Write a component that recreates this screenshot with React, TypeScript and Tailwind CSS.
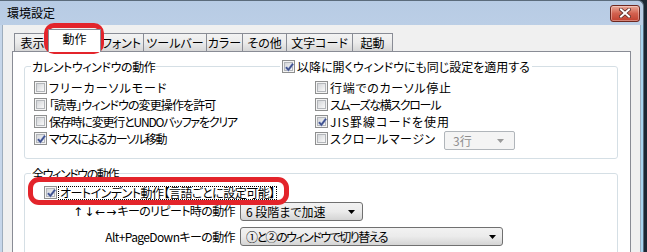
import React from "react";

function Check({ checked }: { checked?: boolean }) {
  return (
    <span className="relative flex h-[13px] w-[13px] shrink-0 border border-[#8e8f8f] bg-[#f4f4f4] p-[1px]">
      <span className="flex-1 border border-[#b3b6ba] bg-gradient-to-br from-[#d4d6d9] to-[#f9f9f9]" />
      {checked && (
        <svg className="absolute left-[1px] top-[1px]" width="11" height="11" viewBox="0 0 11 11">
          <path d="M2 5.2 L4.4 7.8 L9 1.8" fill="none" stroke="#9aa8d0" strokeWidth="2.6" />
          <path d="M2 5.2 L4.4 7.8 L9 1.8" fill="none" stroke="#3d4f8c" strokeWidth="1.4" />
        </svg>
      )}
    </span>
  );
}

function Arrow({ color }: { color: string }) {
  return (
    <svg width="7" height="4" viewBox="0 0 7 4" className="shrink-0">
      <path d="M0 0 H7 L3.5 4 Z" fill={color} />
    </svg>
  );
}

function Close() {
  return (
    <div className="flex h-[17px] w-[30px] items-center justify-center rounded-[3px] border border-[#6e271f] bg-gradient-to-b from-[#e9a999] via-[#d2614f] to-[#c0402f] shadow-[inset_0_0_0_1px_rgba(255,255,255,0.35)]">
      <svg width="12" height="10" viewBox="0 0 12 10">
        <path d="M2 1.5 L10 8.5 M10 1.5 L2 8.5" stroke="#5a2a25" strokeWidth="3.6" strokeLinecap="square" />
        <path d="M2 1.5 L10 8.5 M10 1.5 L2 8.5" stroke="#ffffff" strokeWidth="2" strokeLinecap="square" />
      </svg>
    </div>
  );
}

function Tab({ label, w, last }: { label: string; w: string; last?: boolean }) {
  return (
    <div
      className={
        "flex h-[18px] shrink-0 items-center justify-center border-t border-l border-[#898c95] bg-gradient-to-b from-[#f3f3f3] via-[#ebebeb] to-[#d6d6d6] " +
        w +
        (last ? " border-r" : "")
      }
    >
      {label}
    </div>
  );
}

function Row({ checked, t, children }: { checked?: boolean; t: string; children: React.ReactNode }) {
  return (
    <div className="flex h-[17px] items-center gap-[2px]">
      <Check checked={checked} />
      <span className={"whitespace-nowrap " + t}>{children}</span>
    </div>
  );
}

export default function App() {
  return (
    <div className="relative h-[252px] w-[647px] overflow-hidden bg-[#1c2733] font-['Noto_Sans_CJK_JP',sans-serif] text-[12px] leading-[14px] text-black [font-feature-settings:'palt']">
      <div className="flex h-[252px] w-[644px] flex-col overflow-hidden rounded-tr-[6px] border-t border-r border-[#5b6b7b] bg-gradient-to-b from-[#b7cbe4] via-[#c9d9ec] via-40% to-[#d9e5f2]">
        {/* title bar */}
        <div className="flex h-[24px] shrink-0 items-center pr-[3px] pl-[7px]">
          <span className="flex-1">環境設定</span>
          <Close />
        </div>
        <div className="flex min-h-0 flex-1">
          <div className="w-[2px] bg-[#c6d6ea]" />
          <div className="w-[1px] bg-[#9eadbd]" />
          <div className="flex min-w-0 flex-1 flex-col bg-[#f0f0f0] px-[9px]">
            {/* tabs */}
            <div className="flex h-[26px] shrink-0 items-end pl-[2px]">
              <Tab label="表示" w="w-[36px]" />
              <div className="relative z-10 -mx-[2px] -mb-px flex h-[23px] w-[53px] shrink-0 items-start justify-center border-x border-t border-[#898c95] bg-white pt-[2px]">
                動作
              </div>
              <Tab label="フォント" w="w-[44px]" />
              <Tab label="ツールバー" w="w-[63px]" />
              <Tab label="カラー" w="w-[36px]" />
              <Tab label="その他" w="w-[44px]" />
              <Tab label="文字コード" w="w-[66px]" />
              <Tab label="起動" w="w-[41px]" last />
            </div>
            {/* panel */}
            <div className="flex-1 border border-[#898c95] bg-white pt-[14px] pr-[12px] pl-[11px]">
              {/* group 1 */}
              <div className="rounded-[3px] border border-[#d5dfe5] pb-[11px]">
                <div className="-mt-[8px] grid h-[15px] grid-cols-[255px_1fr] items-center">
                  <span className="ml-[6px] justify-self-start bg-white px-[1px] tracking-[-0.4px] whitespace-nowrap">カレントウィンドウの動作</span>
                  <span className="flex items-center gap-[2px] justify-self-start bg-white px-[2px] whitespace-nowrap">
                    <Check checked />
                    以降に開くウィンドウにも同じ設定を適用する
                  </span>
                </div>
                <div className="grid grid-cols-[281px_1fr] pt-[5px] pl-[9px]">
                  <div className="flex flex-col">
                    <Row t="tracking-[1px]">フリーカーソルモード</Row>
                    <Row t="tracking-[-0.9px]">「読専」ウィンドウの変更操作を許可</Row>
                    <Row t="tracking-[-1.2px]">保存時に変更行とUNDOバッファをクリア</Row>
                    <Row checked t="tracking-[-1.3px]">マウスによるカーソル移動</Row>
                  </div>
                  <div className="flex flex-col">
                    <Row t="tracking-[0.7px]">行端でのカーソル停止</Row>
                    <Row t="tracking-[-1.3px]">スムーズな横スクロール</Row>
                    <Row checked t="tracking-[1px]">JIS罫線コードを使用</Row>
                    <div className="flex h-[17px] items-center gap-[2px]">
                      <Check />
                      <span className="w-[112px] tracking-[0.5px] whitespace-nowrap">スクロールマージン</span>
                      <div className="mt-[4px] flex h-[19px] w-[71px] items-center rounded-[2px] border border-[#b0b5ba] bg-[#f4f4f4] pr-[10px] pl-[8px] text-[#8d8d8d]">
                        <span className="flex-1">3行</span>
                        <Arrow color="#9a9a9a" />
                      </div>
                    </div>
                  </div>
                </div>
              </div>
              {/* group 2 */}
              <div className="mt-[14px] rounded-[3px] border border-[#d5dfe5] pb-[11px]">
                <div className="-mt-[8px] flex h-[15px] items-center">
                  <span className="ml-[6px] bg-white px-[1px] tracking-[-1.4px] whitespace-nowrap">全ウィンドウの動作</span>
                </div>
                <div className="flex flex-col pt-[3px]">
                  <div className="flex h-[17px] items-center pl-[19px]">
                    <Check checked />
                    <span className="ml-[1px] flex h-[14px] items-center border border-dotted border-black px-[1px] tracking-[-0.5px] whitespace-nowrap">
                      オートインデント動作【言語ごとに設定可能】
                    </span>
                  </div>
                  <div className="mt-[1px] flex h-[19px] items-center gap-[5px]">
                    <span className="w-[210px] text-right whitespace-nowrap">
                      <span className="font-['DejaVu_Sans'] text-[12px] tracking-[1px]">↑↓←→</span>
                      <span className="tracking-[-0.6px]">キーのリピート時の動作</span>
                    </span>
                    <div className="flex h-[19px] w-[123px] items-center rounded-[3px] border border-[#707070] bg-gradient-to-b from-[#f2f2f2] via-[#ebebeb] to-[#d4d4d4] pr-[7px] pl-[5px]">
                      <span className="flex-1 whitespace-nowrap">6 段階まで加速</span>
                      <Arrow color="#000000" />
                    </div>
                  </div>
                  <div className="mt-[6px] flex h-[19px] items-center gap-[5px]">
                    <span className="w-[210px] text-right tracking-[-0.6px] whitespace-nowrap">Alt+PageDownキーの動作</span>
                    <div className="flex h-[19px] w-[263px] items-center rounded-[3px] border border-[#707070] bg-gradient-to-b from-[#f2f2f2] via-[#ebebeb] to-[#d4d4d4] pr-[6px] pl-[5px]">
                      <span className="flex-1 tracking-[-1.5px] whitespace-nowrap">①と②のウィンドウで切り替える</span>
                      <Arrow color="#000000" />
                    </div>
                  </div>
                  <div className="mt-[3px] flex h-[19px] items-center pl-[60px]">
                    <span className="whitespace-nowrap">ウィンドウ分割の動作</span>
                  </div>
                </div>
              </div>
            </div>
          </div>
          <div className="w-[1px] bg-[#9eadbd]" />
          <div className="w-[2px] bg-[#a9d5f0]" />
        </div>
      </div>
      {/* red annotations */}
      <div className="absolute top-[23px] left-[44px] h-[31px] w-[60px] rounded-[10px] border-[5px] border-[#e3242b]" />
      <div className="absolute top-[177px] left-[28px] h-[28px] w-[261px] rounded-[11px] border-[5px] border-[#e3242b]" />
    </div>
  );
}
